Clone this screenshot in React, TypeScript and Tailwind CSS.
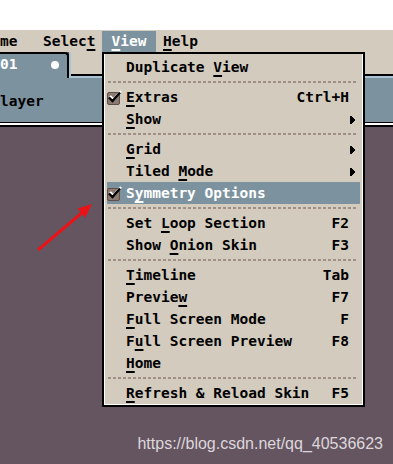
// App.tsx
// Aseprite-style "View" menu dropped over the sprite tab strip.

type Item =
  | { kind: "sep" }
  | {
      kind: "item";
      label: string;
      mn: number; // index of underlined mnemonic letter
      shortcut?: string;
      sub?: boolean;
      checked?: boolean;
      active?: boolean;
    };

const items: Item[] = [
  { kind: "item", label: "Duplicate View", mn: 10 },
  { kind: "sep" },
  { kind: "item", label: "Extras", mn: 0, shortcut: "Ctrl+H", checked: true },
  { kind: "item", label: "Show", mn: 0, sub: true },
  { kind: "sep" },
  { kind: "item", label: "Grid", mn: 0, sub: true },
  { kind: "item", label: "Tiled Mode", mn: 6, sub: true },
  { kind: "item", label: "Symmetry Options", mn: 1, checked: true, active: true },
  { kind: "sep" },
  { kind: "item", label: "Set Loop Section", mn: 4, shortcut: "F2" },
  { kind: "item", label: "Show Onion Skin", mn: 5, shortcut: "F3" },
  { kind: "sep" },
  { kind: "item", label: "Timeline", mn: 0, shortcut: "Tab" },
  { kind: "item", label: "Preview", mn: 6, shortcut: "F7" },
  { kind: "item", label: "Full Screen Mode", mn: 0, shortcut: "F" },
  { kind: "item", label: "Full Screen Preview", mn: 1, shortcut: "F8" },
  { kind: "item", label: "Home", mn: 0 },
  { kind: "sep" },
  { kind: "item", label: "Refresh & Reload Skin", mn: 0, shortcut: "F5" },
];

const pixelFont = "font-['DejaVu_Sans_Mono','Liberation_Mono',monospace]";

function Mnemonic({ text, at }: { text: string; at: number }) {
  return (
    <span className="whitespace-pre">
      {text.slice(0, at)}
      <span className="underline decoration-2 underline-offset-[3px]">{text[at]}</span>
      {text.slice(at + 1)}
    </span>
  );
}

function CheckBox() {
  return (
    <svg className="h-[15px] w-[15px]" viewBox="0 0 15 15">
      <rect x="0.5" y="2.5" width="12" height="12" rx="1.5" fill="#8c7a70" stroke="#5e5049" />
      <path d="M2 7 L5.5 10.5 L13 2" fill="none" stroke="#fff" strokeWidth="2.4" transform="translate(1 -1)" />
      <path d="M2 7.5 L5.5 11 L13 2.5" fill="none" stroke="#000" strokeWidth="2.4" />
    </svg>
  );
}

function SubArrow() {
  return (
    <svg className="h-[8px] w-[5px]" viewBox="0 0 5 8">
      <path d="M0 0 H2 V1 H3 V2 H4 V3 H5 V5 H4 V6 H3 V7 H2 V8 H0 Z" fill="#000" />
    </svg>
  );
}

function ViewMenu() {
  return (
    <div className="absolute left-[102px] top-[52px] w-[263px] border-2 border-black bg-[#d3cbbe]">
      <div className="border-x border-b border-white pt-[2px]">
        {items.map((it, i) =>
          it.kind === "sep" ? (
            <div key={i} className="flex h-[8px] items-center pl-[3px] pr-[4px]">
              <div className="h-[2px] w-full bg-[repeating-linear-gradient(90deg,#a08f84_0_3px,transparent_3px_5px)]" />
            </div>
          ) : (
            <div
              key={i}
              className={
                "mx-[2px] flex h-[22px] items-center pt-[1px] " +
                (it.active ? "bg-[#7d929f] text-white" : "text-black") +
                (it.sub ? " pr-[5px]" : " pr-[11px]")
              }
            >
              <div className="flex w-[19px] items-center">{it.checked && <CheckBox />}</div>
              <div className="flex-1">
                <Mnemonic text={it.label} at={it.mn} />
              </div>
              {it.shortcut && <span>{it.shortcut}</span>}
              {it.sub && <SubArrow />}
            </div>
          )
        )}
      </div>
    </div>
  );
}

export default function App() {
  return (
    <div className={"relative flex h-[464px] w-[393px] flex-col overflow-hidden bg-[#655561] text-[14.5px] font-bold leading-none " + pixelFont}>
      {/* outside of the window */}
      <div className="h-[30px] bg-white" />

      {/* menu bar */}
      <div className="flex h-[22px] items-center bg-[#d3cbbe] pt-[1px] text-black">
        <span className="w-[43px]">me</span>
        <span className="w-[59px]">
          <Mnemonic text="Select" at={5} />
        </span>
        <span className="flex h-full w-[54px] items-center justify-center bg-[#7d929f] text-white">
          <Mnemonic text="View" at={0} />
        </span>
        <span className="ml-[7px]">
          <Mnemonic text="Help" at={0} />
        </span>
      </div>

      {/* tab strip */}
      <div className="flex h-[26px]">
        <div className="flex w-[69px] items-center justify-between rounded-tr-[4px] border-r-2 border-t-2 border-black bg-[#7d929f] pb-[3px] text-white">
          <span>01</span>
          <span className="mr-[8px] h-[8px] w-[8px] rounded-full bg-white" />
        </div>
        <div className="flex flex-1 flex-col border-l-2 border-[#a9c5d4] bg-[#d3cbbe]">
          <div className="flex-1" />
          <div className="h-[2px] bg-black" />
          <div className="h-[2px] bg-[#a9c5d4]" />
        </div>
      </div>

      {/* layer panel */}
      <div className="flex h-[44px] items-end bg-[#7d929f] pb-[14px] text-black">
        <span>layer</span>
      </div>
      <div className="h-[1px] bg-black" />
      <div className="h-[2px] bg-white" />
      <div className="h-[2px] bg-black" />
      <div className="flex-1" />

      <ViewMenu />

      {/* annotation arrow */}
      <svg className="absolute left-0 top-0 h-[464px] w-[393px]" viewBox="0 0 393 464">
        <line x1="38" y1="250" x2="84" y2="211" stroke="#e8141a" strokeWidth="3" />
        <polygon points="92,204 85.3,217.7 77.5,208.5" fill="#e8141a" />
      </svg>

      <div className="absolute bottom-[12px] right-[10px] font-['Liberation_Sans',Arial,sans-serif] text-[16px] font-normal text-[#ddd7db]">
        https://blog.csdn.net/qq_40536623
      </div>
    </div>
  );
}
